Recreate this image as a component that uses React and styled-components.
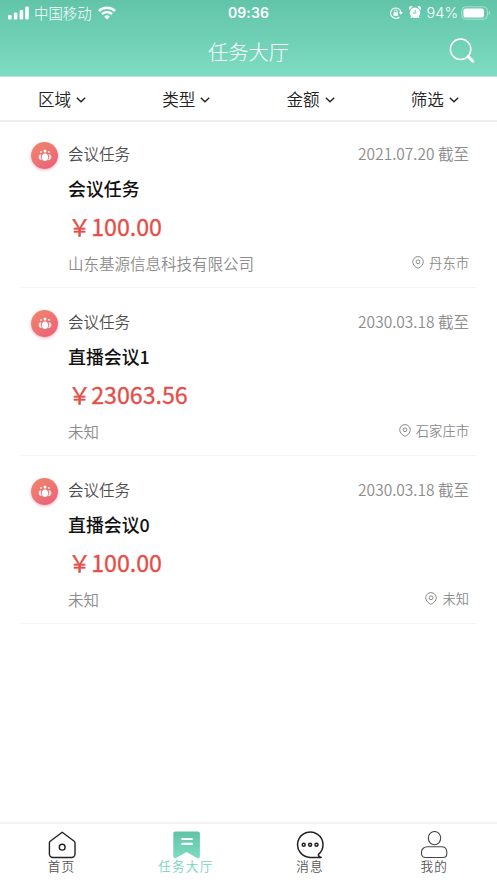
import React from "react";
import styled, { createGlobalStyle } from "styled-components";

const GlobalStyle = createGlobalStyle`
  * {
    box-sizing: border-box;
  }

  body {
    margin: 0;
    background: #fff;
    font-family: "Noto Sans CJK SC", "Noto Sans", sans-serif;
  }

  svg {
    display: block;
    flex: none;
  }
`;

const Page = styled.div`
  display: flex;
  flex-direction: column;
  width: 100%;
  height: 100vh;
  overflow: hidden;
  white-space: nowrap;
`;

const Header = styled.header`
  height: 77px;
  flex: none;
  color: #fff;
  background: linear-gradient(#61c4a8, #7edcc2);
  border-bottom: 1px solid #b5e6d9;
`;

const StatusBar = styled.div`
  display: grid;
  grid-template-columns: 1fr auto 1fr;
  align-items: center;
  height: 25px;
  padding: 0 6px 0 8px;
`;

const StatusGroup = styled.div`
  display: flex;
  align-items: center;
  justify-content: ${(props) => (props.$end ? "flex-end" : "flex-start")};
`;

const Carrier = styled.span`
  margin: 0 6px 0 5px;
  font-size: 14.4px;
  font-weight: 300;
  line-height: 24px;
`;

const Time = styled.span`
  margin-right: 2px;
  font-family: Inter, sans-serif;
  font-size: 14px;
  font-weight: 600;
  letter-spacing: 0.1px;
`;

const Battery = styled.span`
  margin: 0 3px 0 6px;
  font-family: Inter, sans-serif;
  font-size: 14.5px;
  font-weight: 300;
`;

const TitleBar = styled.div`
  display: grid;
  grid-template-columns: 1fr auto 1fr;
  align-items: center;
  height: 52px;
  padding: 0 22px;
`;

const PageTitle = styled.h1`
  grid-column: 2;
  margin: 0;
  font-size: 20.3px;
  font-weight: 300;
  line-height: 50px;
`;

const SearchButton = styled.button`
  justify-self: end;
  padding: 0;
  color: #fff;
  background: none;
  border: 0;
`;

const FilterBar = styled.div`
  display: grid;
  grid-template-columns: repeat(4, 1fr);
  height: 45px;
  flex: none;
  border-bottom: 2px solid #eee;
`;

const FilterItem = styled.div`
  display: flex;
  align-items: center;
  justify-content: center;
  gap: 5px;
  color: #222;
  font-size: 16.6px;
  font-weight: 350;
  line-height: 45px;
`;

const TaskList = styled.main`
  flex: 1;
  margin-top: -2px;
  padding: 0 20px;
`;

const Task = styled.article`
  display: flex;
  height: 168px;
  padding: 22px 8px 0 11px;
  border-bottom: 1px solid #f5f5f5;
`;

const Avatar = styled.div`
  display: flex;
  align-items: center;
  justify-content: center;
  width: 27px;
  height: 27px;
  flex: none;
  border-radius: 50%;
  background: linear-gradient(145deg, #f0886a, #eb5f7a);
  box-shadow: 0 1px 3px rgba(235, 95, 122, 0.5);
`;

const TaskBody = styled.div`
  flex: 1;
  margin: -1px 0 0 10px;
`;

const Row = styled.div`
  display: flex;
  justify-content: space-between;
  height: 24px;
  font-size: 15.5px;
  font-weight: 350;
  line-height: 24px;
`;

const Kind = styled.span`
  color: #4d4d4d;
`;

const Muted = styled.span`
  color: #8c8c8c;
`;

const TaskTitle = styled.h2`
  height: 26px;
  margin: 10px 0 0;
  color: #111;
  font-size: 17.9px;
  font-weight: 500;
  line-height: 26px;
`;

const Price = styled.div`
  height: 34px;
  margin: 8px 0;
  color: #e54d47;
  font-size: 23.2px;
  font-weight: 400;
  line-height: 34px;
  -webkit-text-stroke: 0.3px #e54d47;
`;

const Place = styled.span`
  display: flex;
  align-items: center;
  gap: 5px;
  color: #8c8c8c;
  font-size: 13.3px;
  line-height: 22px;
  height: 23px;
`;

const TabBar = styled.nav`
  display: grid;
  grid-template-columns: repeat(4, 1fr);
  height: 61px;
  flex: none;
  border-top: 2px solid #f3f3f3;
`;

const Tab = styled.div`
  display: flex;
  flex-direction: column;
  align-items: center;
  padding: 7px 1px 0 0;
  color: ${(props) => (props.$active ? "#72d4ba" : "#555")};
  font-size: 12.6px;
  font-weight: 350;
  letter-spacing: 1.2px;
`;

const TabLabel = styled.span`
  height: 16px;
  line-height: 14px;
`;

const SignalIcon = () => (
  <svg width="21" height="14" viewBox="0 0 21 14" fill="#fff">
    <rect x="0" y="9" width="3.6" height="4.5" rx="1" />
    <rect x="5.8" y="6.5" width="3.6" height="7" rx="1" />
    <rect x="11.6" y="4" width="3.6" height="9.5" rx="1" />
    <rect x="17.2" y="0.6" width="3.6" height="12.9" rx="1" />
  </svg>
);

const WifiIcon = () => (
  <svg width="18" height="14" viewBox="0 0 18 14" fill="none" stroke="#fff">
    <path d="M.9 5.1a11.6 11.6 0 0 1 16.2 0" strokeWidth="2.5" />
    <path d="M3.9 8.2a7.4 7.4 0 0 1 10.2 0" strokeWidth="2.3" />
    <path d="M9 13.5 6.2 10.7a4 4 0 0 1 5.6 0Z" fill="#fff" stroke="none" />
  </svg>
);

const LockIcon = () => (
  <svg width="13" height="12" viewBox="0 0 13 12" fill="none" stroke="#fff">
    <path d="M9.4 10A5.2 5.2 0 1 1 11 5.4" strokeWidth="1.1" />
    <path d="M8.8 5h4.1l-2 2.7Z" fill="#fff" stroke="none" />
    <rect x="3.5" y="5.2" width="4.6" height="3.5" rx="0.5" fill="#fff" stroke="none" />
    <path d="M4.4 5.5V4.4a1.4 1.4 0 0 1 2.8 0v1.1" strokeWidth="0.9" />
  </svg>
);

const AlarmIcon = styled.svg`
  margin-left: 6px;
`;

const Alarm = () => (
  <AlarmIcon width="12" height="13" viewBox="0 0 12 13">
    <g fill="#fff">
      <circle cx="6" cy="6.8" r="5.2" />
      <path d="M.4 4A2 2 0 0 1 3.6.8ZM11.6 4A2 2 0 0 0 8.4.8Z" />
      <path d="m2.6 10-1.4 2h1.5l1-1.3ZM9.4 10l1.4 2H9.3l-1-1.3Z" />
    </g>
    <path d="M6.3 3.8v3.4H3.6" fill="none" stroke="#68c9ad" strokeWidth="0.9" />
  </AlarmIcon>
);

const BatteryIcon = () => (
  <svg width="30" height="14" viewBox="0 0 30 14">
    <rect x="0.8" y="0.8" width="25.6" height="12.4" rx="3.8" fill="none" stroke="#fff" strokeOpacity="0.45" />
    <rect x="2.4" y="2.4" width="20.6" height="9.2" rx="2.2" fill="#fff" />
    <path d="M27.8 5v4a2.2 2.2 0 0 0 0-4Z" fill="#fff" fillOpacity="0.5" />
  </svg>
);

const SearchIcon = () => (
  <svg width="26" height="26" viewBox="0 0 26 26" fill="none" stroke="currentColor">
    <circle cx="11.6" cy="11.2" r="10.2" strokeWidth="1.5" />
    <path d="m18.4 18 1.4 1.2" strokeWidth="1.6" />
    <path d="m19.4 18.8 4.4 4.4" strokeWidth="3" strokeLinecap="round" />
  </svg>
);

const ChevronIcon = () => (
  <svg width="10" height="6" viewBox="0 0 10 6" fill="none" stroke="#222" strokeWidth="1.4">
    <path d="m.8.8 4.2 4 4.2-4" />
  </svg>
);

const PeopleIcon = () => (
  <svg width="14" height="13" viewBox="0 0 14 13" fill="#fff">
    <circle cx="7" cy="1.9" r="1.5" />
    <circle cx="3" cy="3.1" r="1" opacity="0.85" />
    <circle cx="11" cy="3.1" r="1" opacity="0.85" />
    <ellipse cx="7" cy="8.3" rx="3.1" ry="3.8" />
    <path d="M3.4 5.200C1.700 4.900.6 6.300.6 8c0 2 1.300 3.300 3.400 3.200-1-1.700-1.200-4-.6-6Z" opacity="0.8" />
    <path d="M10.600 5.200c1.700-.3 2.800 1.100 2.800 2.800 0 2-1.300 3.300-3.400 3.200 1-1.700 1.200-4 .6-6Z" opacity="0.8" />
  </svg>
);

const PinIcon = () => (
  <svg width="12" height="13" viewBox="0 0 12 13" fill="none" stroke="#8c8c8c">
    <path d="M6 12.300C3.600 11.200.7 9.100.7 5.800a5.300 5.200 0 0 1 10.600 0c0 3.300-2.900 5.400-5.300 6.500Z" />
    <circle cx="6" cy="5.800" r="1.900" />
  </svg>
);

const HomeIcon = () => (
  <svg width="28" height="28" viewBox="0 0 28 28" fill="none" stroke="#222" strokeWidth="1.400">
    <path d="M14.200 1.200 26.200 10.300c.6.500.8.900.8 1.600V23a3.500 3.500 0 0 1-3.500 3.500H4.900A3.500 3.500 0 0 1 1.400 23V11.900c0-.7.200-1.100.8-1.600Z" strokeLinejoin="round" />
    <circle cx="14.200" cy="16.200" r="2.900" />
  </svg>
);

const HallIcon = () => (
  <svg width="28" height="28" viewBox="0 0 28 28">
    <defs>
      <linearGradient id="hall" x1="0" y1="0" x2="0" y2="1">
        <stop offset="0" stopColor="#5fc3a6" />
        <stop offset="1" stopColor="#7edcc2" />
      </linearGradient>
    </defs>
    <path d="M3.300.4h22.600a2 2 0 0 1 2 2v22.900c0 1.700-1.500 2.400-2.900 1.600L14.500 21.100 4.200 26.900c-1.400.8-2.900.1-2.900-1.600V2.400a2 2 0 0 1 2-2Z" fill="url(#hall)" />
    <path d="M10.100 8h9.800M10.100 12.900h9.800" stroke="#fff" strokeWidth="2.100" strokeLinecap="round" />
  </svg>
);

const MessageIcon = () => (
  <svg width="28" height="28" viewBox="0 0 28 28" fill="none" stroke="#222" strokeWidth="1.500">
    <path d="M25.200 26.400H14.300A12.700 12.700 0 1 1 22.500 23.400c-.3 1.300.7 2.500 2.700 3Z" strokeLinejoin="round" />
    <circle cx="7.700" cy="13.700" r="1.500" />
    <circle cx="14.100" cy="13.700" r="1.500" />
    <circle cx="20.500" cy="13.700" r="1.500" />
  </svg>
);

const UserIcon = () => (
  <svg width="28" height="28" viewBox="0 0 28 28" fill="none" stroke="#444" strokeWidth="1.100">
    <ellipse cx="14.500" cy="7.100" rx="6.200" ry="6.600" />
    <path d="M7.600 15.700h13.800c3.400 0 5.400 2.300 5.400 5.200v1.500c0 2.600-1.300 4.100-3.900 4.100H5.700c-2.600 0-4.200-1.500-4.200-4.100v-1.500c0-2.900 2.700-5.200 6.100-5.200Z" />
  </svg>
);

const filters = ["区域", "类型", "金额", "筛选"];

const tasks = [
  {
    title: "会议任务",
    date: "2021.07.20",
    price: "100.00",
    company: "山东基源信息科技有限公司",
    place: "丹东市",
  },
  {
    title: "直播会议1",
    date: "2030.03.18",
    price: "23063.56",
    company: "未知",
    place: "石家庄市",
  },
  {
    title: "直播会议0",
    date: "2030.03.18",
    price: "100.00",
    company: "未知",
    place: "未知",
  },
];

const tabs = [
  { label: "首页", icon: HomeIcon },
  { label: "任务大厅", icon: HallIcon, active: true },
  { label: "消息", icon: MessageIcon },
  { label: "我的", icon: UserIcon },
];

const App = () => {
  return (
    <>
      <GlobalStyle />
      <Page>
        <Header>
          <StatusBar>
            <StatusGroup>
              <SignalIcon />
              <Carrier>中国移动</Carrier>
              <WifiIcon />
            </StatusGroup>
            <Time>09:36</Time>
            <StatusGroup $end>
              <LockIcon />
              <Alarm />
              <Battery>94%</Battery>
              <BatteryIcon />
            </StatusGroup>
          </StatusBar>
          <TitleBar>
            <PageTitle>任务大厅</PageTitle>
            <SearchButton>
              <SearchIcon />
            </SearchButton>
          </TitleBar>
        </Header>
        <FilterBar>
          {filters.map((name) => (
            <FilterItem key={name}>
              {name}
              <ChevronIcon />
            </FilterItem>
          ))}
        </FilterBar>
        <TaskList>
          {tasks.map((task) => (
            <Task key={task.title}>
              <Avatar>
                <PeopleIcon />
              </Avatar>
              <TaskBody>
                <Row>
                  <Kind>会议任务</Kind>
                  <Muted>{task.date} 截至</Muted>
                </Row>
                <TaskTitle>{task.title}</TaskTitle>
                <Price>￥{task.price}</Price>
                <Row>
                  <Muted>{task.company}</Muted>
                  <Place>
                    <PinIcon />
                    {task.place}
                  </Place>
                </Row>
              </TaskBody>
            </Task>
          ))}
        </TaskList>
        <TabBar>
          {tabs.map(({ label, icon: Icon, active }) => (
            <Tab key={label} $active={active}>
              <Icon />
              <TabLabel>{label}</TabLabel>
            </Tab>
          ))}
        </TabBar>
      </Page>
    </>
  );
};

export default App;
